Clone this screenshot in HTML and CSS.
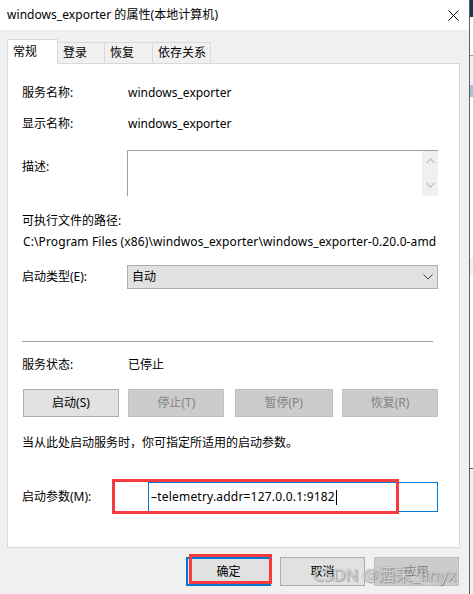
FILE: index.html
```html
<!DOCTYPE html>
<html lang="zh-CN">
<head>
<meta charset="utf-8">
<title>windows_exporter 的属性(本地计算机)</title>
<link rel="stylesheet" href="styles.css">
</head>
<body>
<div class="window">
  <div class="titlebar">
    <span class="title">windows_exporter 的属性(本地计算机)</span>
    <svg class="close" width="11" height="11" viewBox="0 0 11 11"><path d="M0.5 0.5 L10.5 10.5 M10.5 0.5 L0.5 10.5" stroke="#000" stroke-width="1" fill="none"/></svg>
  </div>
  <div class="body">
    <div class="tabs">
      <div class="tab active tab-w1">常规</div>
      <div class="tab tab-w2">登录</div>
      <div class="tab tab-w3">恢复</div>
      <div class="tab tab-w4">依存关系</div>
    </div>
    <div class="panel">
      <div class="row r1"><span class="lbl">服务名称:</span><span>windows_exporter</span></div>
      <div class="row r2"><span class="lbl">显示名称:</span><span>windows_exporter</span></div>
      <div class="row desc"><span class="lbl desc-lbl">描述:</span>
        <div class="descbox">
          <div class="vscroll">
            <svg width="9" height="6" viewBox="0 0 9 6"><path d="M0.5 5 L4.5 1 L8.5 5" stroke="#c4c4c4" stroke-width="1.4" fill="none"/></svg>
            <svg width="9" height="6" viewBox="0 0 9 6"><path d="M0.5 1 L4.5 5 L8.5 1" stroke="#c4c4c4" stroke-width="1.4" fill="none"/></svg>
          </div>
        </div>
      </div>
      <div class="plain pathlbl">可执行文件的路径:</div>
      <div class="plain path">C:\Program Files (x86)\windwos_exporter\windows_exporter-0.20.0-amd</div>
      <div class="row type"><span class="lbl">启动类型(E):</span>
        <div class="select"><span>自动</span>
          <svg width="10" height="6" viewBox="0 0 10 6"><path d="M0.5 0.5 L5 5 L9.5 0.5" stroke="#444" stroke-width="1" fill="none"/></svg>
        </div>
      </div>
      <div class="sep"></div>
      <div class="row status"><span class="lbl">服务状态:</span><span>已停止</span></div>
      <div class="btnrow">
        <div class="btn">启动(S)</div>
        <div class="btn disabled">停止(T)</div>
        <div class="btn disabled wide">暂停(P)</div>
        <div class="btn disabled">恢复(R)</div>
      </div>
      <div class="plain hint">当从此处启动服务时，你可指定所适用的启动参数。</div>
      <div class="row param"><span class="lbl">启动参数(M):</span>
        <div class="input"><span>–telemetry.addr=127.0.0.1:9182</span><span class="caret"></span></div>
        <div class="redbox param-red"></div>
      </div>
    </div>
    <div class="footer">
      <div class="fbtn default">确定<div class="redbox ok-red"></div></div>
      <div class="fbtn">取消</div>
      <div class="fbtn disabled">应用</div>
    </div>
  </div>
  <div class="watermark">CSDN @酒来_linyx</div>
</div>
<div class="strip">
  <div class="s-navy"></div>
  <div class="s-white1"></div>
  <div class="s-line"></div>
  <div class="s-gray"></div>
  <div class="s-blue"></div>
  <div class="s-white2"></div>
  <div class="s-gray2"></div>
  <div class="s-white3"></div>
  <div class="s-dark"></div>
  <div class="s-white4"></div>
</div>
</body>
</html>
```
FILE: styles.css
```css
html, body {
  margin: 0;
  padding: 0;
}
body {
  width: 473px;
  height: 594px;
  overflow: hidden;
  display: flex;
  font-family: "Noto Sans", "Noto Sans CJK SC", sans-serif;
  font-size: 12px;
  line-height: 16px;
  color: #000;
  background: #f0f0f0;
}
.window {
  position: relative;
  width: 469px;
  flex: none;
  border-right: 1px solid #5f5f5f;
  background: #f0f0f0;
  display: flex;
  flex-direction: column;
}
.titlebar {
  height: 30px;
  flex: none;
  background: #fff;
  display: flex;
  align-items: center;
  justify-content: space-between;
  padding: 0 10px 0 7px;
}
.title {
  font-size: 12px;
  letter-spacing: 0.05px;
}
.close {
  display: block;
}
.body {
  padding: 9px 9px 0 7px;
}
.tabs {
  display: flex;
  align-items: flex-end;
  height: 24px;
}
.tab {
  box-sizing: border-box;
  height: 21px;
  border: 1px solid #d9d9d9;
  border-bottom: none;
  border-right: none;
  padding-left: 5px;
  line-height: 20px;
  background: #f0f0f0;
  white-space: nowrap;
}
.tab.active {
  height: 25px;
  margin-bottom: -1px;
  padding-top: 2px;
  background: #fff;
  border-right: 1px solid #d9d9d9;
  position: relative;
  z-index: 1;
}
.tab-w1 { width: 51px; }
.tab-w2 { width: 47px; margin-left: -1px; }
.tab-w3 { width: 48px; }
.tab-w4 { width: 59px; border-right: 1px solid #d9d9d9; }
.panel {
  box-sizing: border-box;
  height: 485px;
  border: 1px solid #d9d9d9;
  background: #fff;
  padding: 21px 0 0 14px;
}
.row {
  display: flex;
  align-items: center;
  line-height: 16px;
  white-space: nowrap;
}
.lbl {
  width: 106px;
  flex: none;
}
.r2 { margin-top: 15px; }
.desc {
  margin-top: 18px;
  align-items: flex-start;
}
.desc-lbl {
  padding-top: 9px;
}
.descbox {
  box-sizing: border-box;
  margin-left: -1px;
  width: 311px;
  height: 46px;
  border-top: 1px solid #a0a0a0;
  border-left: 1px solid #a0a0a0;
  display: flex;
  justify-content: flex-end;
}
.vscroll {
  width: 16px;
  background: #f0f0f0;
  display: flex;
  flex-direction: column;
  align-items: center;
  justify-content: space-between;
  padding: 7px 0 8px;
  box-sizing: border-box;
}
.vscroll svg { display: block; }
.plain {
  white-space: nowrap;
}
.pathlbl { margin-top: 17px; }
.path {
  margin-top: 5px;
  margin-left: 1px;
  width: 416px;
  letter-spacing: 0.11px;
}
.type { margin-top: 15px; }
.select {
  box-sizing: border-box;
  margin-left: -1px;
  width: 311px;
  height: 24px;
  background: #e1e1e1;
  border: 1px solid #adadad;
  display: flex;
  align-items: center;
  justify-content: space-between;
  padding: 0 4px 0 4px;
}
.select svg { display: block; }
.sep {
  margin-top: 52px;
  width: 411px;
  height: 1px;
  background: #a0a0a0;
}
.status { margin-top: 15px; }
.btnrow {
  margin-top: 16px;
  margin-left: 1px;
  width: 415px;
  display: flex;
  justify-content: space-between;
}
.btn {
  box-sizing: border-box;
  width: 96px;
  height: 28px;
  background: #e1e1e1;
  border: 1px solid #adadad;
  display: flex;
  align-items: center;
  justify-content: center;
}
.btn.wide { width: 98px; margin-left: 1px; }
.btn.disabled,
.fbtn.disabled {
  background: #cccccc;
  border-color: #bfbfbf;
  color: #838383;
}
.hint { margin-top: 18px; }
.param {
  margin-top: 31px;
  position: relative;
}
.input {
  box-sizing: border-box;
  margin-left: 20px;
  width: 290px;
  height: 30px;
  border: 1px solid #0078d7;
  display: flex;
  align-items: center;
  padding-left: 2px;
  letter-spacing: 0.2px;
}
.caret {
  display: inline-block;
  width: 1px;
  height: 15px;
  background: #000;
  margin-left: 1px;
}
.redbox {
  position: absolute;
  box-sizing: border-box;
  border: 3px solid #f63a3d;
  pointer-events: none;
}
.param-red {
  left: 90px;
  top: -3px;
  width: 287px;
  height: 35px;
}
.footer {
  margin-top: 9px;
  display: flex;
  justify-content: flex-end;
  gap: 9px;
  padding-right: 1px;
}
.fbtn {
  position: relative;
  box-sizing: border-box;
  width: 85px;
  height: 29px;
  background: #e1e1e1;
  border: 1px solid #adadad;
  display: flex;
  align-items: center;
  justify-content: center;
}
.fbtn.default {
  border: 2px solid #0078d7;
}
.ok-red {
  left: 1px;
  top: -5px;
  width: 83px;
  height: 30px;
}
.watermark {
  position: absolute;
  left: 313px;
  top: 564px;
  font-size: 17px;
  line-height: 22px;
  white-space: nowrap;
  color: rgba(245, 245, 245, 0.75);
  text-shadow: 0 0 1px rgba(60, 60, 60, 0.7), 1px 1px 1px rgba(60, 60, 60, 0.35);
}
.strip {
  width: 3px;
  flex: none;
  display: flex;
  flex-direction: column;
  background: #fff;
}
.s-navy { height: 17px; background: #1d3557; }
.s-white1 { height: 38px; background: #fff; }
.s-line { height: 1px; background: #a0a0a0; }
.s-gray { height: 29px; background: #f0f0f0; }
.s-blue { height: 12px; background: #a9c1dd; }
.s-white2 { height: 161px; background: #fff; }
.s-gray2 { height: 17px; background: #f0f0f0; }
.s-white3 { height: 193px; background: #fff; }
.s-dark { height: 1px; background: #606060; }
.s-white4 { flex: 1; background: #f0f0f0; }
```
